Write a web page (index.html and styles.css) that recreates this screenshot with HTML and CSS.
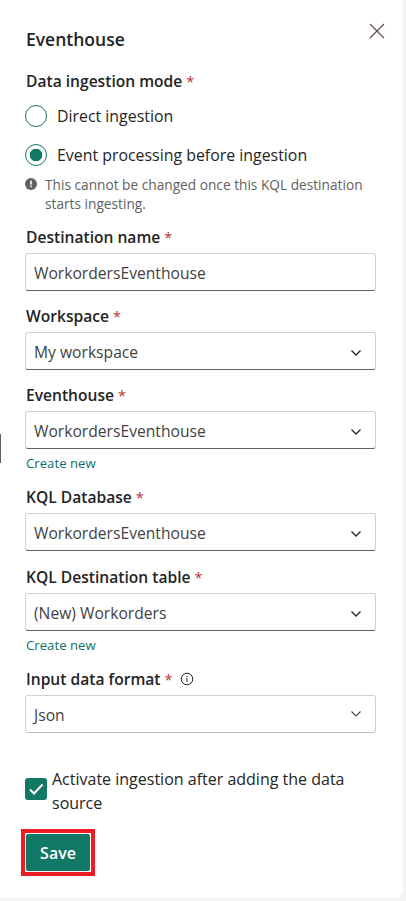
FILE: index.html
```html
<!DOCTYPE html>
<html lang="en">
<head>
    <meta charset="UTF-8">
    <title>Eventhouse</title>
    <link rel="stylesheet" href="styles.css">
</head>
<body>
    <div class="edge-mark"></div>
    <div class="panel">
        <div class="panel-header">
            <h1>Eventhouse</h1>
            <svg class="close-icon" width="16" height="16" viewBox="0 0 16 16"><path d="M1 1L15 15M15 1L1 15" stroke="#5c4a4a" stroke-width="1.1" fill="none"/></svg>
        </div>

        <div class="label first-label">Data ingestion mode <span class="req">*</span></div>
        <div class="radio-row">
            <span class="radio"></span>
            <span>Direct ingestion</span>
        </div>
        <div class="radio-row second-radio">
            <span class="radio checked"></span>
            <span>Event processing before ingestion</span>
        </div>
        <div class="note">
            <svg class="note-icon" width="12" height="12" viewBox="0 0 12 12"><circle cx="6" cy="6" r="6" fill="#616161"/><rect x="5.2" y="2.6" width="1.6" height="4" fill="#fff"/><rect x="5.2" y="7.6" width="1.6" height="1.6" fill="#fff"/></svg>
            <span>This cannot be changed once this KQL destination starts ingesting.</span>
        </div>

        <div class="label after-note">Destination name <span class="req">*</span></div>
        <div class="field"><span>WorkordersEventhouse</span></div>

        <div class="label">Workspace <span class="req">*</span></div>
        <div class="field">
            <span>My workspace</span>
            <svg class="chevron" width="12" height="8" viewBox="0 0 12 8"><path d="M1.5 1.5L6 6L10.5 1.5" stroke="#242424" stroke-width="1.3" fill="none"/></svg>
        </div>

        <div class="label">Eventhouse <span class="req">*</span></div>
        <div class="field">
            <span>WorkordersEventhouse</span>
            <svg class="chevron" width="12" height="8" viewBox="0 0 12 8"><path d="M1.5 1.5L6 6L10.5 1.5" stroke="#242424" stroke-width="1.3" fill="none"/></svg>
        </div>
        <a class="create-link">Create new</a>

        <div class="label after-link">KQL Database <span class="req">*</span></div>
        <div class="field">
            <span>WorkordersEventhouse</span>
            <svg class="chevron" width="12" height="8" viewBox="0 0 12 8"><path d="M1.5 1.5L6 6L10.5 1.5" stroke="#242424" stroke-width="1.3" fill="none"/></svg>
        </div>

        <div class="label table-label">KQL Destination table <span class="req">*</span></div>
        <div class="field">
            <span>(New) Workorders</span>
            <svg class="chevron" width="12" height="8" viewBox="0 0 12 8"><path d="M1.5 1.5L6 6L10.5 1.5" stroke="#242424" stroke-width="1.3" fill="none"/></svg>
        </div>
        <a class="create-link">Create new</a>

        <div class="label after-link">
            Input data format <span class="req">*</span>
            <svg class="info-icon" width="14" height="14" viewBox="0 0 14 14"><circle cx="7" cy="7" r="5.8" stroke="#242424" stroke-width="1" fill="none"/><rect x="6.5" y="6" width="1" height="4" fill="#242424"/><rect x="6.5" y="3.9" width="1" height="1.1" fill="#242424"/></svg>
        </div>
        <div class="field field-plain">
            <span>Json</span>
            <svg class="chevron" width="12" height="8" viewBox="0 0 12 8"><path d="M1.5 1.5L6 6L10.5 1.5" stroke="#424242" stroke-width="1.1" fill="none"/></svg>
        </div>

        <div class="check-row">
            <span class="checkbox">
                <svg width="16" height="14" viewBox="0 0 16 14"><path d="M2 7.5L6 11.5L14.5 2.5" stroke="#fff" stroke-width="2" fill="none"/></svg>
            </span>
            <span class="check-text">Activate ingestion after adding the data source</span>
        </div>

        <div class="save-outline">
            <button class="save-button">Save</button>
        </div>
    </div>
</body>
</html>
```

FILE: styles.css
```css
body {
    margin: 0;
    height: 901px;
    overflow: hidden;
    background-color: #f3f3f3;
    font-family: "Open Sans", "Noto Sans", sans-serif;
    color: #242424;
    position: relative;
}

.panel {
    width: 403px;
    height: 898px;
    box-sizing: border-box;
    padding: 26px 27px 0 25px;
    background-color: #ffffff;
    border-bottom-right-radius: 8px;
}

.edge-mark {
    position: absolute;
    left: 0;
    top: 434px;
    width: 1px;
    height: 29px;
    background-color: #616161;
}

.panel-header {
    display: flex;
    justify-content: space-between;
    height: 26px;
    position: relative;
}

h1 {
    margin: 0;
    padding-left: 1px;
    font-size: 17.5px;
    line-height: 26px;
    font-weight: 600;
}

.close-icon {
    position: absolute;
    right: -9px;
    top: -3px;
}

.label {
    display: flex;
    align-items: center;
    gap: 4px;
    height: 22px;
    margin-top: 14px;
    padding-left: 1px;
    font-size: 15.6px;
    font-weight: 600;
    white-space: nowrap;
}

.first-label {
    margin-top: 18px;
}

.after-note {
    margin-top: 13px;
}

.table-label {
    margin-top: 15px;
}

.req {
    color: #bc2f32;
    font-size: 14.5px;
    font-weight: 400;
}

.radio-row {
    display: flex;
    align-items: center;
    gap: 10px;
    height: 22px;
    margin-top: 13px;
    font-size: 15.9px;
}

.second-radio {
    margin-top: 17px;
}

.radio {
    width: 22px;
    height: 22px;
    box-sizing: border-box;
    border: 1px solid #117865;
    border-radius: 50%;
    flex-shrink: 0;
}

.radio.checked {
    border-width: 1.5px;
    background: radial-gradient(circle, #117865 0 6px, #ffffff 6.6px);
}

.note {
    display: flex;
    gap: 8px;
    margin-top: 9px;
    font-size: 13.7px;
    line-height: 19px;
    color: #616161;
}

.note-icon {
    flex-shrink: 0;
    margin-top: 3px;
}

.field {
    display: flex;
    align-items: center;
    justify-content: space-between;
    height: 38px;
    box-sizing: border-box;
    margin-top: 5px;
    padding: 1px 13px 0 8px;
    border: 1px solid #d1d1d1;
    border-bottom-color: #616161;
    border-radius: 3px;
    font-size: 15.65px;
    color: #424242;
}

.field-plain {
    border-bottom-color: #c0c0c0;
}

.chevron {
    margin-top: 3px;
}

.field-plain .chevron {
    margin-top: -1px;
}

.create-link {
    display: block;
    margin-top: 5px;
    padding-left: 1px;
    font-size: 13.2px;
    line-height: 18px;
    color: #0f6f68;
}

.info-icon {
    margin-left: 3px;
}

.check-row {
    display: flex;
    gap: 5px;
    margin-top: 34px;
    font-size: 16px;
    line-height: 24px;
}

.checkbox {
    display: flex;
    align-items: center;
    justify-content: center;
    width: 22px;
    height: 22px;
    margin-top: 11px;
    flex-shrink: 0;
    background-color: #117865;
    border-radius: 3px;
}

.save-outline {
    width: 74px;
    height: 47px;
    box-sizing: border-box;
    margin-top: 14px;
    margin-left: -4px;
    padding: 1px;
    border: 4px solid #ed1c24;
}

.save-button {
    display: block;
    width: 100%;
    height: 100%;
    padding: 0;
    border: none;
    border-radius: 2px;
    background-color: #117865;
    color: #ffffff;
    font-family: inherit;
    font-size: 16px;
    font-weight: 600;
}
```
